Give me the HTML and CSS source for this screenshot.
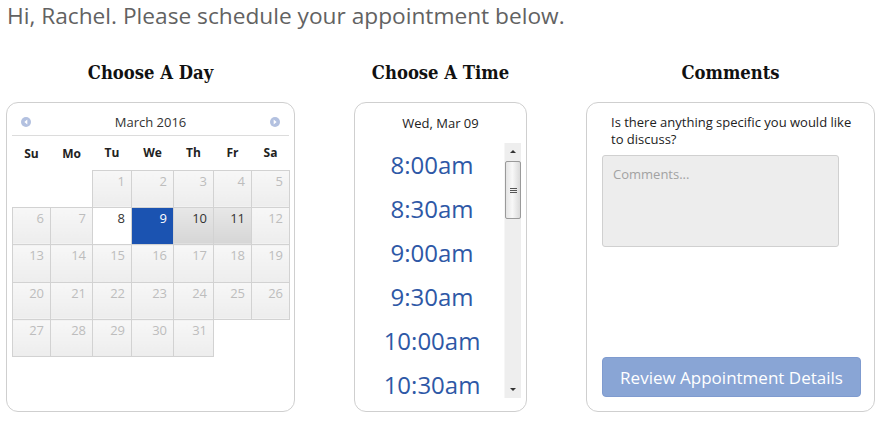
FILE: index.html
```html
<!DOCTYPE html>
<html lang="en">
<head>
<meta charset="utf-8">
<title>Schedule your appointment</title>
<link rel="stylesheet" href="styles.css">
</head>
<body>
<h1 class="greeting">Hi, Rachel. Please schedule your appointment below.</h1>
<div class="columns">
  <section class="col">
    <h2 class="col-title">Choose A Day</h2>
    <div class="card cal-card">
      <div class="cal-head">
        <span class="nav"><svg width="10" height="10" viewBox="0 0 10 10"><circle cx="5" cy="5" r="5" fill="#b3c1e0"/><path d="M6.3 2.6 L3.4 5 L6.3 7.4 Z" fill="#fff"/></svg></span>
        <span class="month">March 2016</span>
        <span class="nav"><svg width="10" height="10" viewBox="0 0 10 10"><circle cx="5" cy="5" r="5" fill="#b3c1e0"/><path d="M3.7 2.6 L6.6 5 L3.7 7.4 Z" fill="#fff"/></svg></span>
      </div>
      <table class="cal">
        <colgroup>
          <col class="w38"><col class="w42"><col class="w39"><col class="w42"><col class="w40"><col class="w38"><col class="w38">
        </colgroup>
        <thead>
          <tr><th>Su</th><th>Mo</th><th>Tu</th><th>We</th><th>Th</th><th>Fr</th><th>Sa</th></tr>
        </thead>
        <tbody>
          <tr><td class="empty"></td><td class="empty"></td><td>1</td><td>2</td><td>3</td><td>4</td><td>5</td></tr>
          <tr><td>6</td><td>7</td><td class="today">8</td><td class="selected">9</td><td class="avail">10</td><td class="avail">11</td><td>12</td></tr>
          <tr><td>13</td><td>14</td><td>15</td><td>16</td><td>17</td><td>18</td><td>19</td></tr>
          <tr><td>20</td><td>21</td><td>22</td><td>23</td><td>24</td><td>25</td><td>26</td></tr>
          <tr><td>27</td><td>28</td><td>29</td><td>30</td><td>31</td><td class="empty"></td><td class="empty"></td></tr>
        </tbody>
      </table>
    </div>
  </section>

  <section class="col">
    <h2 class="col-title">Choose A Time</h2>
    <div class="card time-card">
      <div class="date-label">Wed, Mar 09</div>
      <div class="time-body">
        <ul class="times">
          <li>8:00am</li>
          <li>8:30am</li>
          <li>9:00am</li>
          <li>9:30am</li>
          <li>10:00am</li>
          <li>10:30am</li>
        </ul>
        <div class="scrollbar">
          <span class="sb-btn"><span class="tri-up"></span></span>
          <span class="sb-track"><span class="sb-thumb"><span class="grip"></span></span></span>
          <span class="sb-btn"><span class="tri-down"></span></span>
        </div>
      </div>
    </div>
  </section>

  <section class="col">
    <h2 class="col-title">Comments</h2>
    <div class="card comment-card">
      <label class="question" for="comments">Is there anything specific you would like to discuss?</label>
      <textarea id="comments" class="comments" placeholder="Comments..."></textarea>
      <button class="review" type="button">Review Appointment Details</button>
    </div>
  </section>
</div>
</body>
</html>
```

FILE: styles.css
```css
* { box-sizing: border-box; }

body {
  margin: 0;
  font-family: "Open Sans", "Liberation Sans", sans-serif;
  color: #222;
  background: #fff;
}

.greeting {
  margin: 0;
  padding: 1px 0 0 7px;
  font-size: 22.7px;
  font-weight: 400;
  line-height: 30px;
  color: #626262;
}

.columns {
  display: grid;
  grid-template-columns: 289px 173px 289px;
  column-gap: 59px;
  margin: 30px 0 0 6px;
}

.col-title {
  margin: 0 0 17px;
  font-family: "DejaVu Serif Condensed", "DejaVu Serif", serif;
  font-weight: 700;
  font-size: 18.3px;
  line-height: 24px;
  text-align: center;
  color: #111;
}

.card {
  height: 310px;
  border: 1px solid #cfcfcf;
  border-radius: 12px;
  background: #fff;
}

/* Calendar */
.cal-card { padding: 0 5px; }

.cal-head {
  display: flex;
  align-items: center;
  justify-content: space-between;
  padding: 10px 9px 4px 9px;
  border-bottom: 1px solid #dcdcdc;
}
.cal-head .nav { display: flex; width: 10px; height: 18px; align-items: center; }
.month { font-size: 13px; line-height: 18px; color: #333; }

.cal {
  table-layout: fixed;
  border-collapse: collapse;
  width: 278px;
}
.w38 { width: 38px; }
.w39 { width: 39px; }
.w40 { width: 40px; }
.w42 { width: 42px; }

.cal th {
  height: 34px;
  padding: 0;
  font-size: 12px;
  font-weight: 700;
  color: #222;
  text-align: center;
}

.cal td {
  height: 37.4px;
  padding: 2px 6px 0 0;
  border: 1px solid #d2d2d2;
  vertical-align: top;
  text-align: right;
  font-size: 13px;
  line-height: 17px;
  color: #bdbdbd;
  background: linear-gradient(#f7f7f7, #ededed);
}
.cal td.empty { border: none; background: #fff; }
.cal td.today { background: #fff; color: #333; }
.cal td.selected { background: #1b53b1; color: #fff; }
.cal td.avail { background: linear-gradient(#e8e8e8, #d6d6d6); color: #333; }

/* Time */
.time-card { padding: 0 5px; }

.date-label {
  padding-top: 11px;
  font-size: 13px;
  line-height: 18px;
  text-align: center;
  color: #222;
}

.time-body {
  display: flex;
  height: 255px;
  margin-top: 11px;
}

.times {
  flex: 1;
  display: flex;
  flex-direction: column;
  gap: 18px;
  margin: 0;
  padding: 9px 0 0;
  list-style: none;
}
.times li {
  height: 26px;
  line-height: 26px;
  font-size: 24px;
  text-align: center;
  color: #2e58a6;
}

.scrollbar {
  width: 17px;
  display: flex;
  flex-direction: column;
  background: #eeeeee;
  border-left: 1px solid #f6f6f6;
}
.sb-btn {
  height: 17px;
  display: flex;
  align-items: center;
  justify-content: center;
}
.tri-up {
  width: 0; height: 0;
  border-left: 3px solid transparent;
  border-right: 3px solid transparent;
  border-bottom: 3px solid #333;
}
.tri-down {
  width: 0; height: 0;
  border-left: 3px solid transparent;
  border-right: 3px solid transparent;
  border-top: 3px solid #333;
}
.sb-track { flex: 1; display: flex; flex-direction: column; }
.sb-thumb {
  height: 58px;
  margin: 1px 0 0;
  border: 1px solid #9a9a9a;
  border-radius: 2px;
  background: linear-gradient(90deg, #e4e4e4, #f8f8f8 45%, #dadada);
  display: flex;
  align-items: center;
  justify-content: center;
}
.grip {
  width: 7px;
  height: 5px;
  border-top: 1px solid #555;
  border-bottom: 1px solid #555;
  background: linear-gradient(#555, #555) center / 7px 1px no-repeat;
}

/* Comments */
.comment-card {
  display: flex;
  flex-direction: column;
  padding: 11px 15px 14px;
}
.question {
  padding: 0 0 0 9px;
  font-size: 13px;
  line-height: 17px;
  color: #222;
}
.comments {
  width: 237px;
  height: 92px;
  margin-top: 7px;
  padding: 10px;
  border: 1px solid #d0d0d0;
  border-radius: 3px;
  background: #ededed;
  font-family: "Open Sans", "Liberation Sans", sans-serif;
  font-size: 13px;
  line-height: 17px;
  resize: none;
}
.comments::placeholder { color: #a2a2a2; }

.review {
  margin-top: auto;
  width: 259px;
  height: 40px;
  padding: 0;
  border: 1px solid #7f9bcf;
  border-radius: 4px;
  background: #89a5d5;
  color: #fff;
  font-family: "Open Sans", "Liberation Sans", sans-serif;
  font-size: 17px;
}
```
